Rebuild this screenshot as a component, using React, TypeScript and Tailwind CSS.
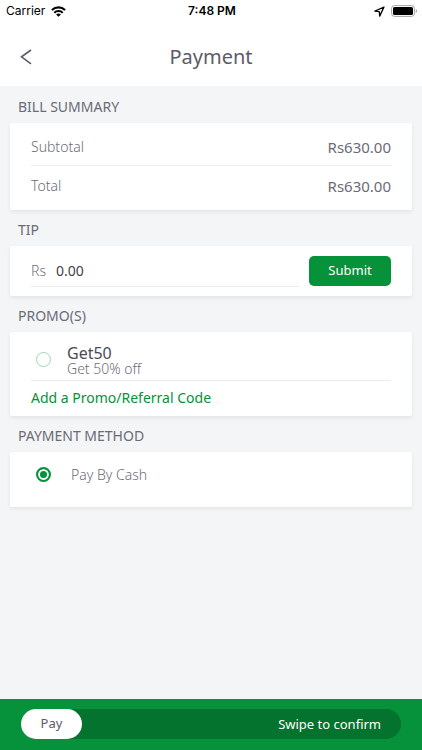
import { useState } from "react";
import type { ReactNode } from "react";

function StatusBar() {
  return (
    <div className="grid h-5 grid-cols-3 items-center pt-0.5 pr-1 pl-1.5 font-['Inter',sans-serif] text-xs leading-4 text-black">
      <div className="flex items-center gap-1.5">
        <span>Carrier</span>
        <svg className="h-[11px] w-[15px]" viewBox="0 0 15 11" fill="none" stroke="currentColor" strokeWidth="2.1" aria-hidden="true">
          <path d="M.9 4.1C4.7.4 10.3.4 14.1 4.1" />
          <path d="M3.3 6.7c2.3-2.2 6.1-2.2 8.4 0" />
          <path d="M7.5 10.8 5.1 8.4c1.3-1.3 3.5-1.3 4.8 0z" fill="currentColor" stroke="none" />
        </svg>
      </div>
      <span className="text-center font-semibold">7:48 PM</span>
      <div className="flex items-center justify-end gap-1.5">
        <svg className="h-[11px] w-[11px]" viewBox="0 0 11 11" fill="none" stroke="currentColor" strokeWidth="1.3" strokeLinejoin="round" aria-hidden="true">
          <path d="M10 1 .9 5.2l4.4.5.4 4.4z" />
        </svg>
        <svg className="h-3 w-[27px]" viewBox="0 0 27 12" aria-hidden="true">
          <rect x="0.6" y="0.6" width="22.8" height="10.8" rx="2.8" fill="none" stroke="#a3a3a3" />
          <rect x="2" y="2" width="20" height="8" rx="1.6" fill="#000" />
          <path d="M24.8 4v4c1.6-.6 1.6-3.4 0-4z" fill="#a3a3a3" />
        </svg>
      </div>
    </div>
  );
}

function Section({ title, children }: { title: string; children: ReactNode }) {
  return (
    <section>
      <h2 className="flex h-9 items-center px-[18px] pt-1 text-sm leading-5 text-[#6b6b76]">{title}</h2>
      <div className="mx-2.5 rounded-xs bg-white px-[21px] shadow-[0_2px_4px_rgba(0,0,0,0.07)]">{children}</div>
    </section>
  );
}

function BillRow({ label, value }: { label: string; value: string }) {
  return (
    <div className="flex items-center justify-between text-sm leading-5">
      <dt className="font-light text-[#6d6d78]">{label}</dt>
      <dd className="text-[15px] text-[#6b6b76]">{value}</dd>
    </div>
  );
}

const radioClass =
  "m-0 h-[15px] w-[15px] shrink-0 appearance-none rounded-full border border-[#9ed5b3] bg-white checked:border-2 checked:border-[#05923b] checked:bg-[#05923b] checked:shadow-[inset_0_0_0_2px_white]";

export default function App() {
  const [tip, setTip] = useState("0.00");
  const [promo, setPromo] = useState(false);

  return (
    <div className="flex min-h-screen flex-col bg-[#f4f5f7] font-['Noto_Sans',sans-serif]">
      <header className="bg-white">
        <StatusBar />
        <div className="grid h-[66px] grid-cols-[40px_1fr_40px] items-center px-3 pt-2.5 pb-0.5">
          <button type="button" aria-label="Back" className="flex h-8 items-center pl-2 text-[#5c5b69]">
            <svg className="h-4 w-3" viewBox="0 0 12 16" fill="none" stroke="currentColor" strokeWidth="1.6" aria-hidden="true">
              <path d="M11 1 1.5 7.8 11 14.8" />
            </svg>
          </button>
          <h1 className="text-center text-xl leading-7 text-[#5c5b69]">Payment</h1>
        </div>
      </header>

      <main className="flex-1 pt-px">
        <Section title="BILL SUMMARY">
          <dl className="h-[87px] pt-3.5">
            <BillRow label="Subtotal" value="Rs630.00" />
            <div className="mt-2 mb-2.5 border-t border-[#ececef]" />
            <BillRow label="Total" value="Rs630.00" />
          </dl>
        </Section>

        <Section title="TIP">
          <form className="flex h-[50px] items-center gap-2.5" onSubmit={(e) => e.preventDefault()}>
            <div className="flex h-8 flex-1 items-center gap-2.5 border-b border-[#ececef] text-sm leading-5">
              <label htmlFor="tip" className="font-light text-[#6d6d78]">Rs</label>
              <input
                id="tip"
                className="w-full min-w-0 bg-transparent text-[#3f3f4a] outline-none"
                value={tip}
                onChange={(e) => setTip(e.target.value)}
              />
            </div>
            <button type="submit" className="h-[30px] w-[82px] rounded-[5px] bg-[#05923b] text-[13px] text-white">
              Submit
            </button>
          </form>
        </Section>

        <Section title="PROMO(S)">
          <div className="flex h-12 items-center gap-4 pt-1.5 pl-[5px]">
            <input id="promo" type="checkbox" className={radioClass} checked={promo} onChange={(e) => setPromo(e.target.checked)} />
            <label htmlFor="promo" className="flex flex-col pt-1">
              <span className="text-base leading-4 text-[#4c4b58]">Get50</span>
              <span className="text-sm leading-4 font-light text-[#6d6d78]">Get 50% off</span>
            </label>
          </div>
          <div className="h-9 border-t border-[#ececef] pt-[7px]">
            <a href="#promo-code" className="block text-sm leading-5 text-[#05923b]">Add a Promo/Referral Code</a>
          </div>
        </Section>

        <Section title="PAYMENT METHOD">
          <div className="flex h-[55px] items-center gap-5 pb-2.5 pl-[5px]">
            <input id="cash" type="radio" name="method" className={radioClass} defaultChecked />
            <label htmlFor="cash" className="text-sm leading-5 font-light text-[#6d6d78]">Pay By Cash</label>
          </div>
        </Section>
      </main>

      <footer className="bg-[#05923b] px-[21px] pt-2.5 pb-[11px]">
        <div className="flex items-center justify-between rounded-full bg-[#04732d] pr-5">
          <button type="button" className="h-[30px] w-[61px] rounded-full bg-white text-[13px] text-[#5c5b69]">Pay</button>
          <span className="text-[13px] leading-5 text-white">Swipe to confirm</span>
        </div>
      </footer>
    </div>
  );
}
